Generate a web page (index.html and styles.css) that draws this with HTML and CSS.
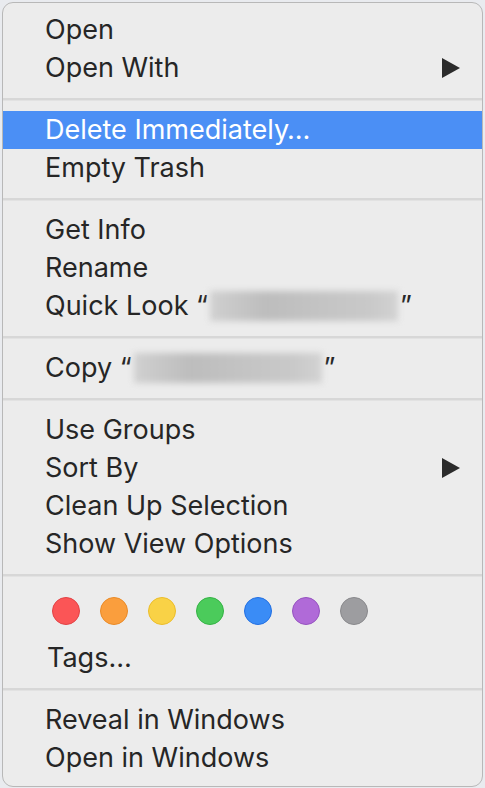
FILE: index.html
```html
<!DOCTYPE html>
<html>
<head>
<meta charset="utf-8">
<link rel="stylesheet" href="styles.css">
</head>
<body>
<div class="menu">
  <div class="item"><span>Open</span></div>
  <div class="item has-sub"><span>Open With</span><span class="arrow"></span></div>
  <div class="sep"></div>
  <div class="item selected"><span>Delete Immediately…</span></div>
  <div class="item"><span>Empty Trash</span></div>
  <div class="sep"></div>
  <div class="item"><span>Get Info</span></div>
  <div class="item"><span>Rename</span></div>
  <div class="item"><span class="label">Quick Look “<span class="blur wide"></span>”</span></div>
  <div class="sep"></div>
  <div class="item"><span class="label">Copy “<span class="blur narrow"></span>”</span></div>
  <div class="sep"></div>
  <div class="item"><span>Use Groups</span></div>
  <div class="item has-sub"><span>Sort By</span><span class="arrow"></span></div>
  <div class="item"><span>Clean Up Selection</span></div>
  <div class="item"><span>Show View Options</span></div>
  <div class="sep"></div>
  <div class="tags">
    <div class="dots">
      <span class="dot red"></span>
      <span class="dot orange"></span>
      <span class="dot yellow"></span>
      <span class="dot green"></span>
      <span class="dot blue"></span>
      <span class="dot purple"></span>
      <span class="dot gray"></span>
    </div>
    <div class="tags-label">Tags…</div>
  </div>
  <div class="sep"></div>
  <div class="item"><span>Reveal in Windows</span></div>
  <div class="item"><span>Open in Windows</span></div>
</div>
</body>
</html>
```

FILE: styles.css
```css
html, body {
  margin: 0;
  padding: 0;
}
body {
  background: #e9ebef;
  width: 485px;
  height: 788px;
  overflow: hidden;
  font-family: "Inter", "Roboto", sans-serif;
}
.menu {
  box-sizing: border-box;
  margin: 2px 0 0 2px;
  width: 481px;
  height: 785px;
  background: #ececec;
  border: 1px solid #b8b8b8;
  border-radius: 11px;
  padding: 8px 0;
  display: flex;
  flex-direction: column;
  overflow: hidden;
}
.item {
  height: 38px;
  flex: none;
  display: flex;
  align-items: center;
  padding-left: 42px;
  padding-right: 22px;
  font-size: 27px;
  line-height: 36px;
  color: #262626;
  white-space: nowrap;
}
.item.selected {
  background: #4b8ff5;
  color: #ffffff;
}
.has-sub {
  justify-content: space-between;
}
.arrow {
  width: 0;
  height: 0;
  border-top: 10px solid transparent;
  border-bottom: 10px solid transparent;
  border-left: 18px solid #2b2b2b;
}
.sep {
  height: 24px;
  flex: none;
  display: flex;
  flex-direction: column;
  justify-content: center;
}
.sep::before {
  content: "";
  display: block;
  height: 2px;
  background: #d7d7d7;
  border-bottom: 1px solid #e2e2e2;
}
.label {
  display: flex;
  align-items: center;
  white-space: pre;
}
.blur {
  display: inline-block;
  height: 30px;
  margin: 0 2px;
  background: linear-gradient(90deg, #d0d0d0, #bdbdbd 30%, #c4c4c4 60%, #c9c9c9 85%, #d2d2d2);
  filter: blur(3px);
}
.blur.wide {
  width: 188px;
}
.blur.narrow {
  width: 188px;
}
.tags {
  height: 90px;
  flex: none;
  display: flex;
  flex-direction: column;
  padding-left: 49px;
}
.dots {
  display: flex;
  gap: 20px;
  margin-top: 10px;
}
.dot {
  width: 28px;
  height: 28px;
  border-radius: 50%;
  box-sizing: border-box;
  border: 1.5px solid;
}
.red { background: #fb5556; border-color: #e24245; }
.orange { background: #fa9e3d; border-color: #ea8a27; }
.yellow { background: #f9d246; border-color: #ecbd2a; }
.green { background: #4bcb5b; border-color: #35b345; }
.blue { background: #3a8cf6; border-color: #226fe2; }
.purple { background: #b06ad8; border-color: #9653c0; }
.gray { background: #9d9da0; border-color: #89898c; }
.tags-label {
  margin-top: 16px;
  margin-left: -5px;
  font-size: 27px;
  color: #262626;
}
```
